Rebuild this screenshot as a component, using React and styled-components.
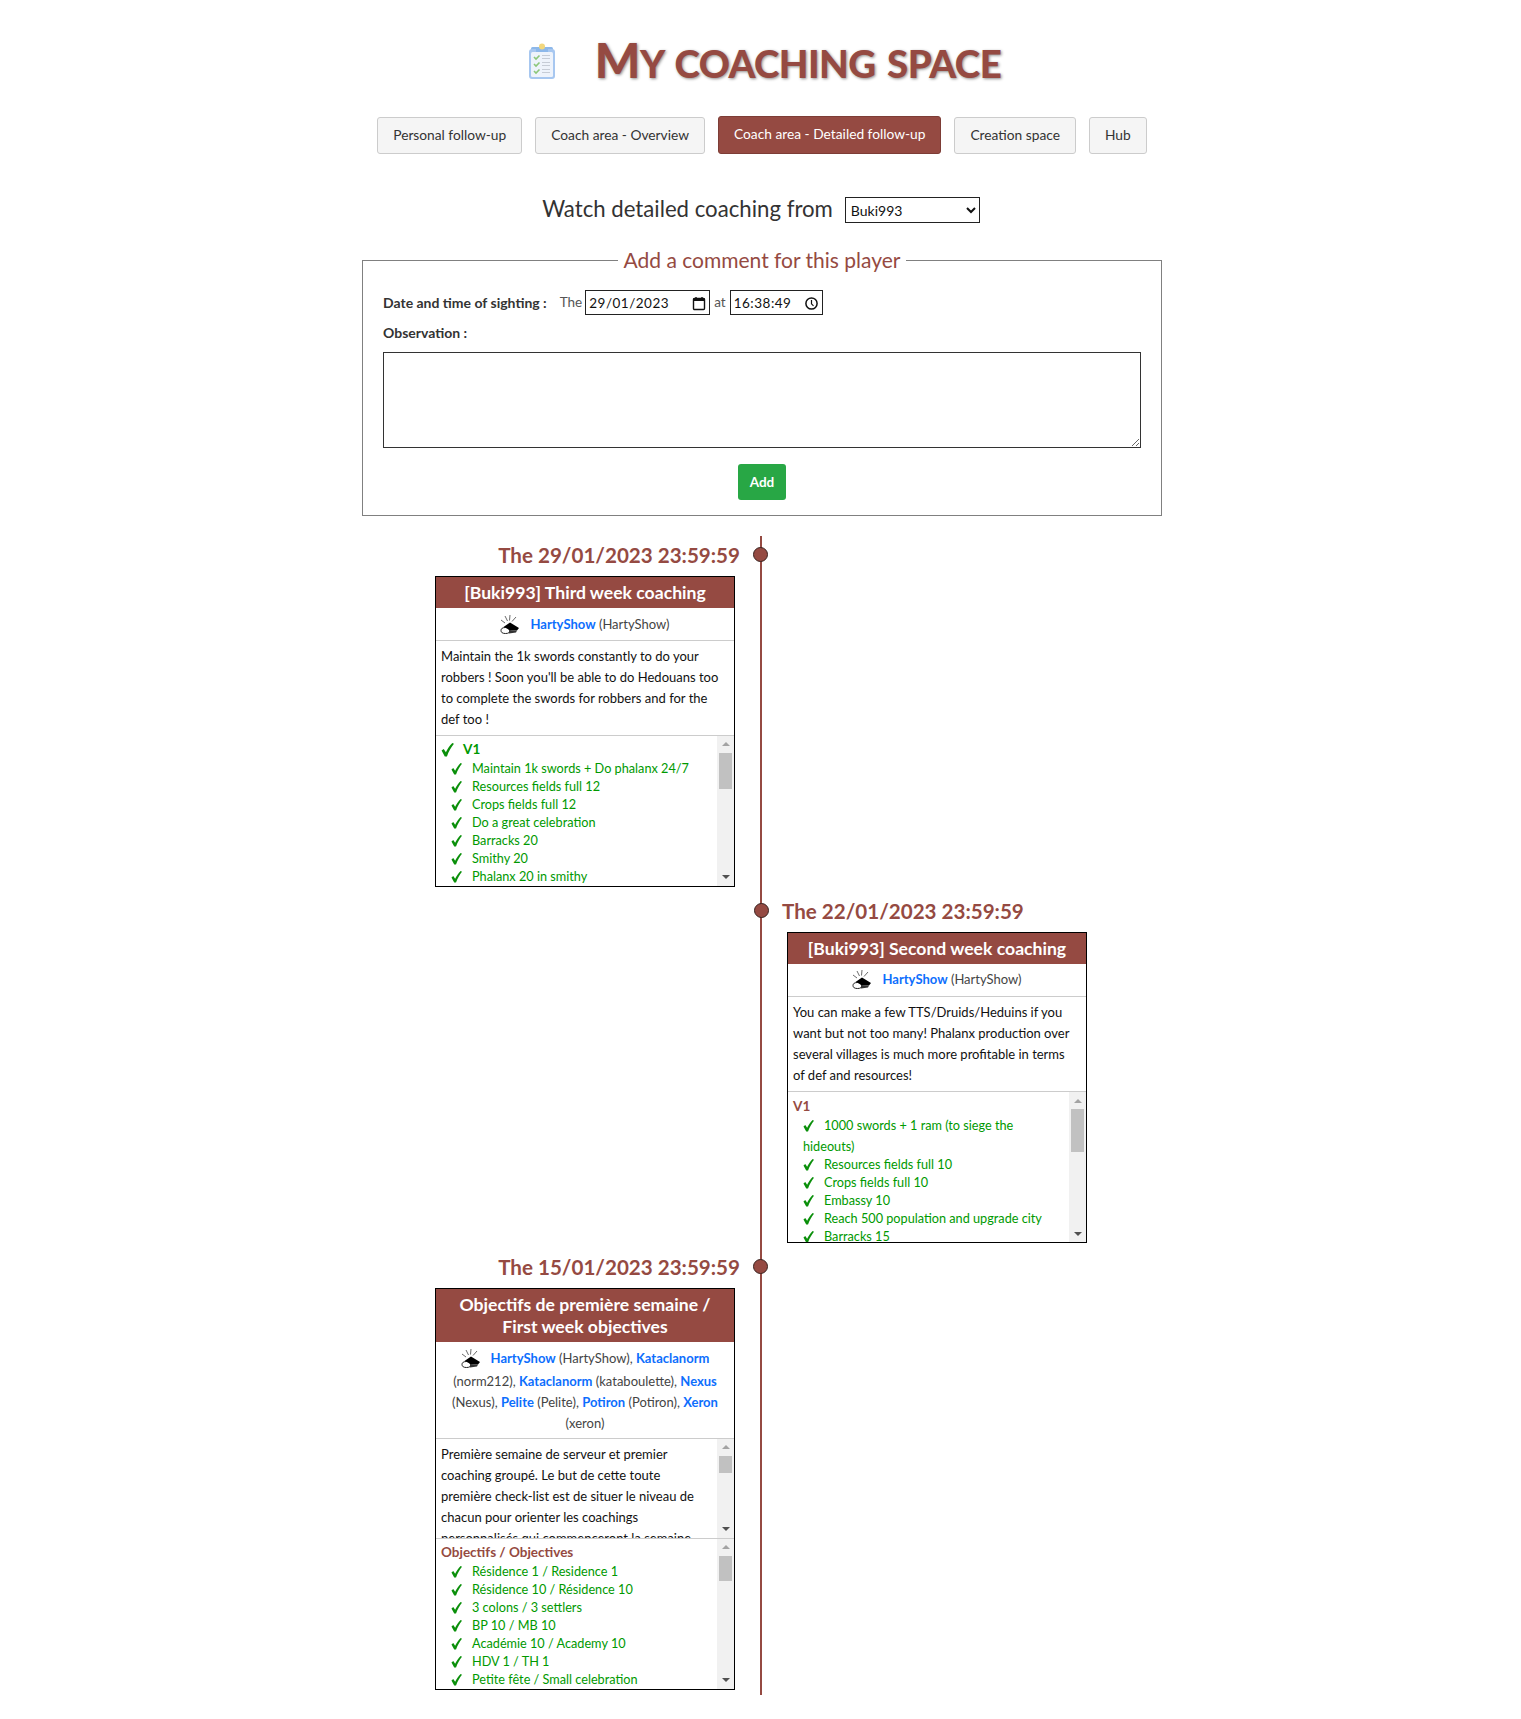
import styled, { createGlobalStyle } from "styled-components";

const BROWN = "#954a42";

const GlobalStyle = createGlobalStyle`
  html, body { margin: 0; padding: 0; background: #fff; }
  body { font-family: Lato, "Open Sans", sans-serif; font-size: 13px; line-height: 21px; color: #212529; }
`;

const Page = styled.div`
  width: 800px;
  margin: 0 0 0 362px;
  padding-bottom: 20px;
`;

const TitleRow = styled.header`
  display: flex;
  justify-content: center;
  align-items: center;
  gap: 39px;
  height: 54px;
  padding-top: 34px;
  margin-left: 5px;
`;

const Title = styled.h1`
  margin: 0;
  font-size: 38.5px;
  line-height: 54px;
  font-weight: 900;
  text-transform: uppercase;
  color: ${BROWN};
  text-shadow: 1px 1px 3px rgba(0, 0, 0, 0.45);
  letter-spacing: -0.6px;
  word-spacing: 3px;
  white-space: nowrap;
  &::first-letter { font-size: 48px; }
`;

const Nav = styled.nav`
  display: flex;
  justify-content: center;
  align-items: center;
  gap: 13px;
  margin-top: 28px;
  height: 38px;
`;

const NavButton = styled.a`
  display: block;
  box-sizing: border-box;
  padding: ${(p) => (p.$active ? "7px 15px 9px" : "7px 15px 8px")};
  height: ${(p) => (p.$active ? "38px" : "37px")};
  border: 1px solid ${(p) => (p.$active ? "#7d3d36" : "#ccc")};
  border-radius: 3px;
  background: ${(p) => (p.$active ? BROWN : "#f5f5f5")};
  color: ${(p) => (p.$active ? "#fff" : "#333")};
  font-size: 13.75px;
  line-height: 20px;
  white-space: nowrap;
`;

const WatchRow = styled.div`
  display: flex;
  justify-content: center;
  align-items: center;
  gap: 12px;
  margin-top: 41px;
  margin-left: -2px;
  height: 30px;
`;

const WatchLabel = styled.span`
  font-size: 22.2px;
  line-height: 26px;
  margin-top: -3px;
  color: #333;
`;

const PlayerSelect = styled.select`
  width: 135px;
  height: 26px;
  border: 1px solid #222;
  border-radius: 0;
  background: #fff;
  font-family: Lato, sans-serif;
  font-size: 14px;
  color: #111;
  padding: 0 1px;
`;

const CommentBox = styled.fieldset`
  box-sizing: border-box;
  margin: 20px 0 0;
  padding: 15px 20px 15px;
  width: 800px;
  border: 1px solid #808080;
`;

const CommentLegend = styled.legend`
  margin: 0 auto;
  padding: 0 6px;
  font-size: 21px;
  line-height: 30px;
  color: ${BROWN};
`;

const SightingRow = styled.div`
  display: flex;
  align-items: center;
  height: 25px;
  font-size: 13.5px;
`;

const FieldLabel = styled.label`
  font-weight: 700;
  color: #333;
  font-size: 14px;
`;

const SmallWord = styled.span`
  color: #555;
  margin: ${(p) => p.$margin};
`;

const InputBox = styled.div`
  box-sizing: border-box;
  display: flex;
  align-items: center;
  justify-content: space-between;
  width: ${(p) => p.$width}px;
  height: 25px;
  padding: 1px 3px 0;
  border: 1px solid #222;
  color: #111;
  font-size: 13.5px;
  letter-spacing: 0.5px;
`;

const BareInput = styled.input`
  border: 0;
  outline: 0;
  padding: 0;
  width: ${(p) => p.$width}px;
  font: inherit;
  letter-spacing: inherit;
  color: inherit;
  background: transparent;
`;

const ObservationRow = styled.div`
  margin-top: 7px;
  line-height: 21px;
`;

const ObservationArea = styled.textarea`
  display: block;
  box-sizing: border-box;
  width: 758px;
  height: 96px;
  margin-top: 8px;
  border: 1px solid #333;
  border-radius: 0;
  padding: 2px;
`;

const AddButton = styled.button`
  display: block;
  margin: 16px auto 0;
  width: 48px;
  height: 36px;
  border: 0;
  border-radius: 3px;
  background: #28a745;
  color: #fff;
  font-family: Lato, sans-serif;
  font-size: 13.5px;
  font-weight: 700;
`;

const Timeline = styled.section`
  position: relative;
  margin-top: 20px;
  padding-bottom: 5px;
  display: flex;
  flex-direction: column;
  gap: 5px;
  &::before {
    content: "";
    position: absolute;
    left: 398px;
    top: 0;
    bottom: 0;
    width: 2px;
    background: ${BROWN};
  }
`;

const Entry = styled.article`
  box-sizing: border-box;
  width: 50%;
  display: flex;
  flex-direction: column;
  align-items: ${(p) => (p.$side === "left" ? "flex-end" : "flex-start")};
  margin-left: ${(p) => (p.$side === "left" ? "0" : "50%")};
  padding: ${(p) => (p.$side === "left" ? "4px 27px 0 0" : "4px 0 0 25px")};
`;

const DateHeading = styled.h4`
  position: relative;
  margin: ${(p) => (p.$side === "left" ? "0 -5px 0 0" : "0 0 0 -5px")};
  font-size: 20.6px;
  line-height: 30px;
  font-weight: 700;
  color: ${BROWN};
  white-space: nowrap;
  &::after {
    content: "";
    position: absolute;
    top: 7px;
    ${(p) => (p.$side === "left" ? "right: -28px;" : "left: -28px;")}
    box-sizing: border-box;
    width: 15px;
    height: 15px;
    border-radius: 50%;
    background: ${BROWN};
    border: 1px solid #3a2320;
  }
`;

const Card = styled.div`
  box-sizing: border-box;
  width: 300px;
  margin-top: 6px;
  border: 1px solid #000;
  background: #fff;
`;

const CardHeader = styled.h5`
  margin: 0;
  padding: 5px 8px 4px;
  background: ${BROWN};
  color: #fff;
  font-size: 17.6px;
  line-height: 22px;
  font-weight: 700;
  text-align: center;
`;

const CoachRow = styled.div`
  padding: 5.5px 5px ${(p) => 3 + (p.$extra || 0)}px;
  text-align: center;
  border-bottom: 1px solid #ccc;
  color: #444;
  font-size: 13px;
`;

const CoachLink = styled.a`
  color: #0d6efd;
  font-weight: 700;
`;

const Whistle = styled.svg`
  width: 20px;
  height: 20px;
  vertical-align: -8px;
  margin: 0 10px 2px 0;
`;

const Description = styled.div`
  padding: 5px 12px 5px 5px;
  color: #111;
  font-size: 13px;
  border-bottom: 1px solid #ccc;
`;

const ScrollBox = styled.div`
  box-sizing: border-box;
  display: flex;
  height: ${(p) => p.$height}px;
  overflow: hidden;
  border-bottom: ${(p) => (p.$divider ? "1px solid #ccc" : "0")};
`;

const ScrollContent = styled.div`
  flex: 1;
  min-width: 0;
  overflow: hidden;
  padding: ${(p) => p.$padding};
  font-size: ${(p) => p.$size}px;
  color: ${(p) => p.$color};
`;

const BarTrack = styled.div`
  flex: none;
  width: 17px;
  display: flex;
  flex-direction: column;
  background: #f1f1f1;
`;

const BarArrow = styled.div`
  flex: none;
  height: 17px;
  display: flex;
  align-items: center;
  justify-content: center;
  &::before {
    content: "";
    border-left: 4px solid transparent;
    border-right: 4px solid transparent;
    border-bottom: ${(p) => (p.$up ? "4px solid #a3a3a3" : "0")};
    border-top: ${(p) => (p.$up ? "0" : "4px solid #505050")};
  }
`;

const BarThumb = styled.div`
  flex: none;
  height: ${(p) => p.$height}px;
  margin: 0 2px;
  background: #c1c1c1;
`;

const BarRest = styled.div`
  flex: 1;
`;

const ListTitle = styled.div`
  display: flex;
  align-items: center;
  height: 17px;
  font-weight: 700;
  font-size: 13.5px;
  color: ${(p) => (p.$done ? "#090" : BROWN)};
`;

const ListItem = styled.div`
  padding-left: 10px;
  margin-bottom: -3px;
`;

const Tick = styled.svg`
  display: inline-block;
  vertical-align: -2px;
  width: ${(p) => (p.$big ? 13 : 11)}px;
  height: ${(p) => (p.$big ? 14 : 12)}px;
  margin-right: ${(p) => (p.$big ? 9 : 10)}px;
`;

const ClipboardIcon = () => (
  <svg width="28" height="37" viewBox="0 0 28 37" style={{ flex: "none" }}>
    <rect x="3" y="4" width="22" height="5" rx="1.5" fill="#8db8ea" />
    <rect x="1" y="6" width="26" height="30" rx="3" fill="#a7c7f0" />
    <rect x="3" y="9" width="22" height="25" rx="1.5" fill="#eef3fb" />
    <rect x="8" y="4" width="12" height="5" fill="#8db8ea" />
    <circle cx="14" cy="3.5" r="3" fill="#f2d77e" />
    {[14, 21, 28].map((y) => (
      <g key={y}>
        <path d={`M6 ${y}l2 2 3.5-3.5`} stroke="#8cc77a" strokeWidth="1.6" fill="none" />
        <path d={`M14 ${y - 1.5}h8M14 ${y + 1.5}h8`} stroke="#c6ccd6" strokeWidth="1.2" />
      </g>
    ))}
  </svg>
);

const CalendarIcon = () => (
  <svg width="14" height="15" viewBox="0 0 14 15">
    <rect x="1.5" y="2.5" width="11" height="11" rx="1" fill="#fff" stroke="#111" strokeWidth="1.4" />
    <rect x="1.5" y="2" width="11" height="3" fill="#111" />
    <path d="M4 1v2M10 1v2" stroke="#111" strokeWidth="1.4" />
  </svg>
);

const ClockIcon = () => (
  <svg width="15" height="15" viewBox="0 0 15 15">
    <circle cx="7.5" cy="7.5" r="5.6" fill="none" stroke="#111" strokeWidth="1.5" />
    <path d="M7.5 4v3.8l2 2" fill="none" stroke="#111" strokeWidth="1.2" />
  </svg>
);

const WhistleIcon = () => (
  <Whistle viewBox="0 0 20 20">
    <path d="M5 1l2.500 5M10 0l-.5 5.500M16 2l-4 4.500M1 5l4 3" stroke="#444" strokeWidth="0.8" fill="none" />
    <ellipse cx="5.500" cy="15.500" rx="4.500" ry="3" fill="#fff" stroke="#222" strokeWidth="1" />
    <path d="M3.500 12L10 7.500 19 13l-2 2.500-8-.5c-1.500-1.500-3.500-2.500-5.500-3z" fill="#000" />
    <path d="M9 15l8 .5-1 2-7 1z" fill="#333" />
  </Whistle>
);

const Check = ({ big }) => (
  <Tick $big={big} viewBox="0 0 12 13">
    <path d="M.5 7L2.500 5.500 4.500 8.500C6 5.500 8 2.500 10.500 0L12 .8C9.500 4 7 8 5.500 12.500L3.500 12.500z" fill="#0a8f0a" />
  </Tick>
);

const Scrollbar = ({ thumb }) => (
  <BarTrack>
    <BarArrow $up />
    <BarThumb $height={thumb} />
    <BarRest />
    <BarArrow />
  </BarTrack>
);

const CoachName = ({ name, login }) => (
  <>
    <CoachLink>{name}</CoachLink> ({login})
  </>
);

const CheckList = ({ thumb, children }) => (
  <ScrollBox $height={150}>
    <ScrollContent $padding="5.5px 5px 0" $size={12.7} $color="#090">
      {children}
    </ScrollContent>
    <Scrollbar thumb={thumb} />
  </ScrollBox>
);

const Item = ({ children }) => (
  <ListItem>
    <Check />
    {children}
  </ListItem>
);

const third = ["Maintain 1k swords + Do phalanx 24/7", "Resources fields full 12", "Crops fields full 12", "Do a great celebration", "Barracks 20", "Smithy 20", "Phalanx 20 in smithy"];
const second = ["1000 swords + 1 ram (to siege the hideouts)", "Resources fields full 10", "Crops fields full 10", "Embassy 10", "Reach 500 population and upgrade city", "Barracks 15"];
const first = ["Résidence 1 / Residence 1", "Résidence 10 / Résidence 10", "3 colons / 3 settlers", "BP 10 / MB 10", "Académie 10 / Academy 10", "HDV 1 / TH 1", "Petite fête / Small celebration"];

const App = () => (
  <>
    <GlobalStyle />
    <Page>
      <TitleRow>
        <ClipboardIcon />
        <Title>My coaching space</Title>
      </TitleRow>

      <Nav>
        <NavButton>Personal follow-up</NavButton>
        <NavButton>Coach area - Overview</NavButton>
        <NavButton $active>Coach area - Detailed follow-up</NavButton>
        <NavButton>Creation space</NavButton>
        <NavButton>Hub</NavButton>
      </Nav>

      <WatchRow>
        <WatchLabel>Watch detailed coaching from</WatchLabel>
        <PlayerSelect defaultValue="Buki993">
          <option>Buki993</option>
        </PlayerSelect>
      </WatchRow>

      <CommentBox>
        <CommentLegend>Add a comment for this player</CommentLegend>
        <SightingRow>
          <FieldLabel>Date and time of sighting :</FieldLabel>
          <SmallWord $margin="0 3px 0 13px">The</SmallWord>
          <InputBox $width={125}>
            <BareInput $width={90} defaultValue="29/01/2023" readOnly />
            <CalendarIcon />
          </InputBox>
          <SmallWord $margin="0 4px">at</SmallWord>
          <InputBox $width={93}>
            <BareInput $width={64} defaultValue="16:38:49" readOnly />
            <ClockIcon />
          </InputBox>
        </SightingRow>
        <ObservationRow>
          <FieldLabel>Observation :</FieldLabel>
        </ObservationRow>
        <ObservationArea />
        <AddButton>Add</AddButton>
      </CommentBox>

      <Timeline>
        <Entry $side="left">
          <DateHeading $side="left">The 29/01/2023 23:59:59</DateHeading>
          <Card>
            <CardHeader>[Buki993] Third week coaching</CardHeader>
            <CoachRow>
              <WhistleIcon />
              <CoachName name="HartyShow" login="HartyShow" />
            </CoachRow>
            <Description>
              Maintain the 1k swords constantly to do your robbers ! Soon you'll be able to do Hedouans too to complete the swords for robbers and for the def too !
            </Description>
            <CheckList thumb={36}>
              <ListTitle $done>
                <Check big />
                V1
              </ListTitle>
              {third.map((t) => (
                <Item key={t}>{t}</Item>
              ))}
            </CheckList>
          </Card>
        </Entry>

        <Entry $side="right">
          <DateHeading $side="right">The 22/01/2023 23:59:59</DateHeading>
          <Card>
            <CardHeader>[Buki993] Second week coaching</CardHeader>
            <CoachRow $extra={1}>
              <WhistleIcon />
              <CoachName name="HartyShow" login="HartyShow" />
            </CoachRow>
            <Description>
              You can make a few TTS/Druids/Heduins if you want but not too many! Phalanx production over several villages is much more profitable in terms of def and resources!
            </Description>
            <CheckList thumb={43}>
              <ListTitle>V1</ListTitle>
              {second.map((t) => (
                <Item key={t}>{t}</Item>
              ))}
            </CheckList>
          </Card>
        </Entry>

        <Entry $side="left">
          <DateHeading $side="left">The 15/01/2023 23:59:59</DateHeading>
          <Card>
            <CardHeader>Objectifs de première semaine / First week objectives</CardHeader>
            <CoachRow $extra={1}>
              <WhistleIcon />
              <CoachName name="HartyShow" login="HartyShow" />, <CoachName name="Kataclanorm" login="norm212" />, <CoachName name="Kataclanorm" login="kataboulette" />, <CoachName name="Nexus" login="Nexus" />, <CoachName name="Pelite" login="Pelite" />, <CoachName name="Potiron" login="Potiron" />, <CoachName name="Xeron" login="xeron" />
            </CoachRow>
            <ScrollBox $height={100} $divider>
              <ScrollContent $padding="5px 5px 0" $size={13} $color="#111">
                Première semaine de serveur et premier coaching groupé. Le but de cette toute première check-list est de situer le niveau de chacun pour orienter les coachings personnalisés qui commenceront la semaine
              </ScrollContent>
              <Scrollbar thumb={17} />
            </ScrollBox>
            <CheckList thumb={25}>
              <ListTitle>Objectifs / Objectives</ListTitle>
              {first.map((t) => (
                <Item key={t}>{t}</Item>
              ))}
            </CheckList>
          </Card>
        </Entry>
      </Timeline>
    </Page>
  </>
);

export default App;
